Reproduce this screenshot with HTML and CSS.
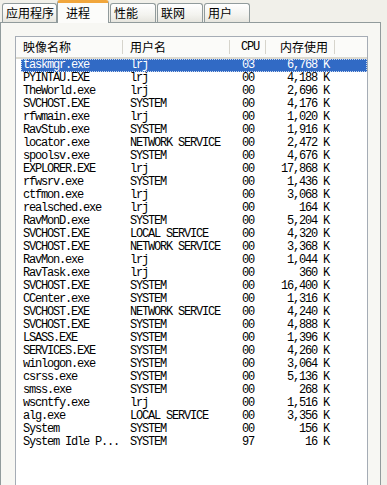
FILE: index.html
```html
<!DOCTYPE html>
<html lang="zh-CN">
<head>
  <meta charset="UTF-8" />
  <title>Windows 任务管理器</title>
  <link rel="stylesheet" href="styles.css">
</head>
<body>
  <div class="tabs">
    <div class="tab tab-wide">应用程序</div>
    <div class="tab active">进程</div>
    <div class="tab">性能</div>
    <div class="tab">联网</div>
    <div class="tab">用户</div>
  </div>

  <div class="panel">
    <div class="list">
      <div class="head">
        <div class="hcell">映像名称</div>
        <div class="hcell">用户名</div>
        <div class="hcell cpu">CPU</div>
        <div class="hcell mem">内存使用</div>
        <div class="hcell filler"></div>
      </div>

      <div class="row selected"><span>taskmgr.exe</span><span>lrj</span><span class="cpu">03</span><span class="mem">6,768 K</span></div>
      <div class="row"><span>PYINTAU.EXE</span><span>lrj</span><span class="cpu">00</span><span class="mem">4,188 K</span></div>
      <div class="row"><span>TheWorld.exe</span><span>lrj</span><span class="cpu">00</span><span class="mem">2,696 K</span></div>
      <div class="row"><span>SVCHOST.EXE</span><span>SYSTEM</span><span class="cpu">00</span><span class="mem">4,176 K</span></div>
      <div class="row"><span>rfwmain.exe</span><span>lrj</span><span class="cpu">00</span><span class="mem">1,020 K</span></div>
      <div class="row"><span>RavStub.exe</span><span>SYSTEM</span><span class="cpu">00</span><span class="mem">1,916 K</span></div>
      <div class="row"><span>locator.exe</span><span>NETWORK SERVICE</span><span class="cpu">00</span><span class="mem">2,472 K</span></div>
      <div class="row"><span>spoolsv.exe</span><span>SYSTEM</span><span class="cpu">00</span><span class="mem">4,676 K</span></div>
      <div class="row"><span>EXPLORER.EXE</span><span>lrj</span><span class="cpu">00</span><span class="mem">17,868 K</span></div>
      <div class="row"><span>rfwsrv.exe</span><span>SYSTEM</span><span class="cpu">00</span><span class="mem">1,436 K</span></div>
      <div class="row"><span>ctfmon.exe</span><span>lrj</span><span class="cpu">00</span><span class="mem">3,068 K</span></div>
      <div class="row"><span>realsched.exe</span><span>lrj</span><span class="cpu">00</span><span class="mem">164 K</span></div>
      <div class="row"><span>RavMonD.exe</span><span>SYSTEM</span><span class="cpu">00</span><span class="mem">5,204 K</span></div>
      <div class="row"><span>SVCHOST.EXE</span><span>LOCAL SERVICE</span><span class="cpu">00</span><span class="mem">4,320 K</span></div>
      <div class="row"><span>SVCHOST.EXE</span><span>NETWORK SERVICE</span><span class="cpu">00</span><span class="mem">3,368 K</span></div>
      <div class="row"><span>RavMon.exe</span><span>lrj</span><span class="cpu">00</span><span class="mem">1,044 K</span></div>
      <div class="row"><span>RavTask.exe</span><span>lrj</span><span class="cpu">00</span><span class="mem">360 K</span></div>
      <div class="row"><span>SVCHOST.EXE</span><span>SYSTEM</span><span class="cpu">00</span><span class="mem">16,400 K</span></div>
      <div class="row"><span>CCenter.exe</span><span>SYSTEM</span><span class="cpu">00</span><span class="mem">1,316 K</span></div>
      <div class="row"><span>SVCHOST.EXE</span><span>NETWORK SERVICE</span><span class="cpu">00</span><span class="mem">4,240 K</span></div>
      <div class="row"><span>SVCHOST.EXE</span><span>SYSTEM</span><span class="cpu">00</span><span class="mem">4,888 K</span></div>
      <div class="row"><span>LSASS.EXE</span><span>SYSTEM</span><span class="cpu">00</span><span class="mem">1,396 K</span></div>
      <div class="row"><span>SERVICES.EXE</span><span>SYSTEM</span><span class="cpu">00</span><span class="mem">4,260 K</span></div>
      <div class="row"><span>winlogon.exe</span><span>SYSTEM</span><span class="cpu">00</span><span class="mem">3,064 K</span></div>
      <div class="row"><span>csrss.exe</span><span>SYSTEM</span><span class="cpu">00</span><span class="mem">5,136 K</span></div>
      <div class="row"><span>smss.exe</span><span>SYSTEM</span><span class="cpu">00</span><span class="mem">268 K</span></div>
      <div class="row"><span>wscntfy.exe</span><span>lrj</span><span class="cpu">00</span><span class="mem">1,516 K</span></div>
      <div class="row"><span>alg.exe</span><span>LOCAL SERVICE</span><span class="cpu">00</span><span class="mem">3,356 K</span></div>
      <div class="row"><span>System</span><span>SYSTEM</span><span class="cpu">00</span><span class="mem">156 K</span></div>
      <div class="row"><span>System Idle P...</span><span>SYSTEM</span><span class="cpu">97</span><span class="mem">16 K</span></div>
    </div>
  </div>
</body>
</html>
```

FILE: styles.css
```css
body {
  margin: 0;
  width: 387px;
  height: 485px;
  overflow: hidden;
  background: #f1f0ea;
  font-family: "Noto Sans CJK SC", sans-serif;
  font-size: 12px;
  color: #000;
}
.tabs {
  display: flex;
  align-items: flex-end;
  height: 22px;
  padding-left: 2px;
  position: relative;
  z-index: 1;
}
.tab {
  box-sizing: border-box;
  width: 46px;
  height: 19px;
  margin-right: 1px;
  padding-left: 3px;
  line-height: 18px;
  border: 1px solid #919b9c;
  border-bottom: none;
  border-radius: 3px 3px 0 0;
  background: linear-gradient(#ffffff, #f3f3ef 60%, #e6e5de);
}
.tab-wide {
  width: 55px;
}
.tab.active {
  width: 52px;
  height: 23px;
  margin: 0 1px -1px -1px;
  padding-left: 8px;
  line-height: 20px;
  border-top: 3px solid #f1a63c;
  background: #fcfcfa;
}
.panel {
  box-sizing: border-box;
  width: 381px;
  height: 470px;
  padding: 13px 0 0 14px;
  border: 1px solid #919b9c;
  background: #f7f7f3;
}
.list {
  box-sizing: border-box;
  width: 353px;
  height: 460px;
  border: 1px solid #a5acb5;
  background: #fff;
  font-family: "Liberation Mono", monospace;
  font-size: 12px;
  letter-spacing: -1.2px;
}
.head {
  display: grid;
  grid-template-columns: 107px 107px 36px 69px 1fr;
  height: 20px;
  border-bottom: 2px solid #dcdad0;
  background: #fbfbf9;
  font-family: "Noto Sans CJK SC", sans-serif;
  font-size: 12px;
  letter-spacing: 0;
  line-height: 20px;
}
.hcell {
  padding-left: 7px;
  border-right: 1px solid #d6d4cc;
  margin: 3px 0;
  line-height: 14px;
}
.hcell.cpu {
  padding-left: 11px;
  font-family: "Liberation Mono", monospace;
  letter-spacing: -1.2px;
}
.hcell.mem {
  padding: 0 6px 0 0;
  text-align: right;
}
.hcell.filler {
  border-right: none;
}
.row {
  display: grid;
  grid-template-columns: 102px 107px 36px 69px;
  height: 13px;
  margin-left: 5px;
  line-height: 13px;
  white-space: nowrap;
}
.row span {
  padding-left: 7px;
  overflow: hidden;
}
.row span:first-child {
  padding-left: 2px;
}
.row .cpu {
  padding-left: 12px;
}
.row .mem {
  padding: 0 6px 0 0;
  text-align: right;
}
.row.selected {
  background: #316ac5;
  color: #fff;
  outline: 1px dotted #c8d8f0;
  outline-offset: -1px;
}
```
